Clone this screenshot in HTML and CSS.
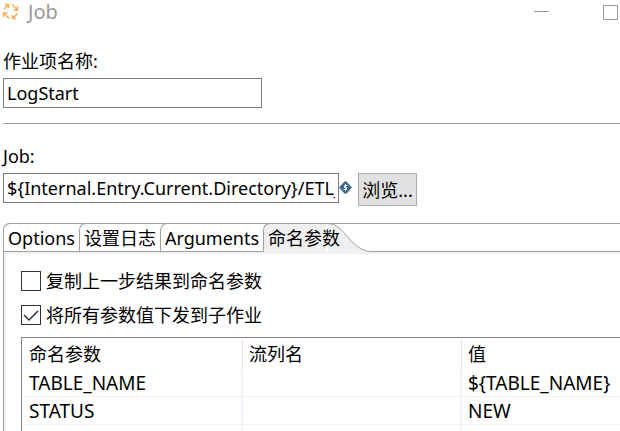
FILE: index.html
```html
<!DOCTYPE html>
<html lang="zh-CN">
<head>
<meta charset="utf-8">
<title>Job</title>
<link rel="stylesheet" href="styles.css">
</head>
<body>
<header class="titlebar">
  <svg class="app-icon" viewBox="0 0 18 18" aria-hidden="true">
    <path d="M2 6 6 2M3 1.500h3.500V5M10 1.500l5 5M15.500 3v4h-4M7 15.500l-5-5M1.500 14v-4h4M15.500 10.500l-5 5M10.500 12v3.500H14"/>
  </svg>
  <h1 class="title">Job</h1>
  <button class="win-btn" type="button" aria-label="最小化"><svg viewBox="0 0 15 15"><path d="M0 6.500h15"/></svg></button>
  <button class="win-btn" type="button" aria-label="最大化"><svg viewBox="0 0 15 15"><path d="M.5.5h14v14H.5z"/></svg></button>
</header>
<main class="dialog">
  <section class="field field-name">
    <label for="entry-name">作业项名称:</label>
    <input class="text name-input" id="entry-name" type="text" value="LogStart">
  </section>
  <hr class="divider">
  <section class="field">
    <label for="job-path">Job:</label>
    <div class="path-row">
      <input class="text path-input" id="job-path" type="text" value="${Internal.Entry.Current.Directory}/ETL_">
      <svg class="var-icon" viewBox="0 0 13 13" aria-hidden="true"><path class="gem" d="M5 1 6.500 0 8 1l5 5.500L8 12l-1.500 1L5 12 0 6.500z"/><path class="mark" d="M8.500 4.500h-3v2h2v2h-3M6.500 3v7"/></svg>
      <button class="browse" type="button">浏览...</button>
    </div>
  </section>
  <section class="tabs">
    <div class="tablist" role="tablist">
      <button class="tab" type="button" role="tab">Options</button>
      <button class="tab" type="button" role="tab">设置日志</button>
      <button class="tab" type="button" role="tab">Arguments</button>
      <button class="tab selected" type="button" role="tab" aria-selected="true">命名参数</button>
      <svg class="curve" viewBox="0 0 44 29" aria-hidden="true"><path class="curve-fill" d="M0 0C17 0 22 28.500 44 28.500V29H0z"/><path class="curve-line" d="M0 .5h44M0 .5C17 .5 22 28.500 44 28.500"/></svg>
      <span class="tab-rest"></span>
    </div>
    <div class="panel" role="tabpanel">
      <label class="check"><input type="checkbox"><span>复制上一步结果到命名参数</span></label>
      <label class="check"><input type="checkbox" checked><span>将所有参数值下发到子作业</span></label>
      <div class="grid">
        <table>
          <colgroup><col class="c1"><col class="c2"><col></colgroup>
          <thead><tr><th>命名参数</th><th>流列名</th><th>值</th></tr></thead>
          <tbody>
            <tr><td>TABLE_NAME</td><td></td><td>${TABLE_NAME}</td></tr>
            <tr><td>STATUS</td><td></td><td>NEW</td></tr>
            <tr><td></td><td></td><td></td></tr>
          </tbody>
        </table>
      </div>
    </div>
  </section>
</main>
</body>
</html>
```
FILE: styles.css
```css
* { box-sizing: border-box; }
body, button, input {
  font: 18px/24px "Noto Sans", "Noto Sans CJK SC", sans-serif;
  color: #000;
}
body {
  margin: 0;
  height: 100vh;
  background: #fff;
  display: flex;
  flex-direction: column;
}
.titlebar {
  display: flex;
  flex: none;
  align-items: center;
  height: 24px;
  padding: 0 2px;
}
.app-icon { width: 18px; height: 18px; fill: none; stroke: #f8b055; stroke-width: 1.5; }
.title { margin: 0 auto 0 8px; font-size: 20px; line-height: 28px; font-weight: 400; color: #999; }
.win-btn { display: flex; padding: 0; border: 0; background: none; }
.win-btn + .win-btn { margin-left: 54px; }
.win-btn svg { width: 15px; height: 15px; fill: none; stroke: #999; }
.dialog { flex: 1; min-height: 0; display: flex; flex-direction: column; padding-left: 3px; }
.field { display: flex; flex: none; flex-direction: column; align-items: flex-start; gap: 5px; }
.field-name { padding-top: 25px; }
.text {
  height: 30px;
  padding: 0 3px;
  border: 1px solid #7a7a7a;
  border-radius: 0;
  background: #fff;
  outline: 0;
}
.name-input { width: 259px; }
.divider { width: 100%; margin: 15px 0 20px; border: 0; border-top: 1px solid #a0a0a0; }
.path-row { display: flex; align-items: flex-start; }
.path-input { width: 336px; }
.var-icon { width: 13px; height: 13px; margin-top: 8px; }
.gem { fill: #41698a; }
.mark { fill: none; stroke: #e4ebf1; }
.browse {
  width: 59px;
  height: 33px;
  margin-left: 6px;
  padding: 0;
  border: 1px solid #adadad;
  background: #e1e1e1;
}
.tabs { flex: 1; min-height: 0; display: flex; flex-direction: column; margin-top: 17px; }
.tablist {
  display: flex;
  flex: none;
  height: 29px;
  border-top: 1px solid #a0a0a0;
  border-top-left-radius: 7px;
}
.tablist > * { margin-top: -1px; }
.tab {
  padding: 0 4px;
  border: solid #a0a0a0;
  border-width: 1px 0 1px 1px;
  border-top-left-radius: 7px;
  background: #fff;
  white-space: nowrap;
}
.tab.selected {
  position: relative;
  z-index: 1;
  padding-right: 0;
  margin-right: -12px;
  background: linear-gradient(90deg, #f0f0f0 62px, transparent 62px);
  border-color: #a0a0a0 transparent transparent #a0a0a0;
}
.curve { width: 44px; height: 29px; flex: none; }
.curve-fill { fill: #f0f0f0; }
.curve-line { fill: none; stroke: #a0a0a0; }
.tab-rest { flex: 1; border: solid #a0a0a0; border-width: 1px 0; }
.panel {
  flex: 1;
  min-height: 0;
  display: flex;
  flex-direction: column;
  padding: 12px 0 0 17px;
  border-left: 1px solid #a0a0a0;
  box-shadow: inset 2px 2px #f0f0f0;
}
.check { display: flex; flex: none; align-items: center; gap: 5px; height: 34px; width: max-content; }
.check input {
  appearance: none;
  width: 20px;
  height: 20px;
  margin: 0;
  border: 1px solid #333;
  background: #fff;
}
.check input:checked { background: url("data:image/svg+xml,%3Csvg xmlns='http://www.w3.org/2000/svg' viewBox='0 0 18 18'%3E%3Cpath d='M2 9l5 5 9-9' fill='none' stroke='%23333' stroke-width='1.500'/%3E%3C/svg%3E"); }
.grid {
  flex: 1;
  min-height: 0;
  overflow: hidden;
  margin-top: 5px;
  border: solid #828790;
  border-width: 1px 0 0 1px;
  padding: 1px 0 0 1px;
}
table { width: 100%; border-collapse: separate; border-spacing: 0; table-layout: fixed; }
.c1 { width: 220px; }
.c2 { width: 219px; }
th, td { height: 28px; padding: 0 6px; text-align: left; font-weight: 400; }
th { height: 30px; border-right: 1px solid #e5e5e5; }
td { font-size: 19px; border-right: 2px solid #edf2fb; border-bottom: 1px solid #f0f0f0; }
th:last-child, td:last-child { border-right: 0; }
```
